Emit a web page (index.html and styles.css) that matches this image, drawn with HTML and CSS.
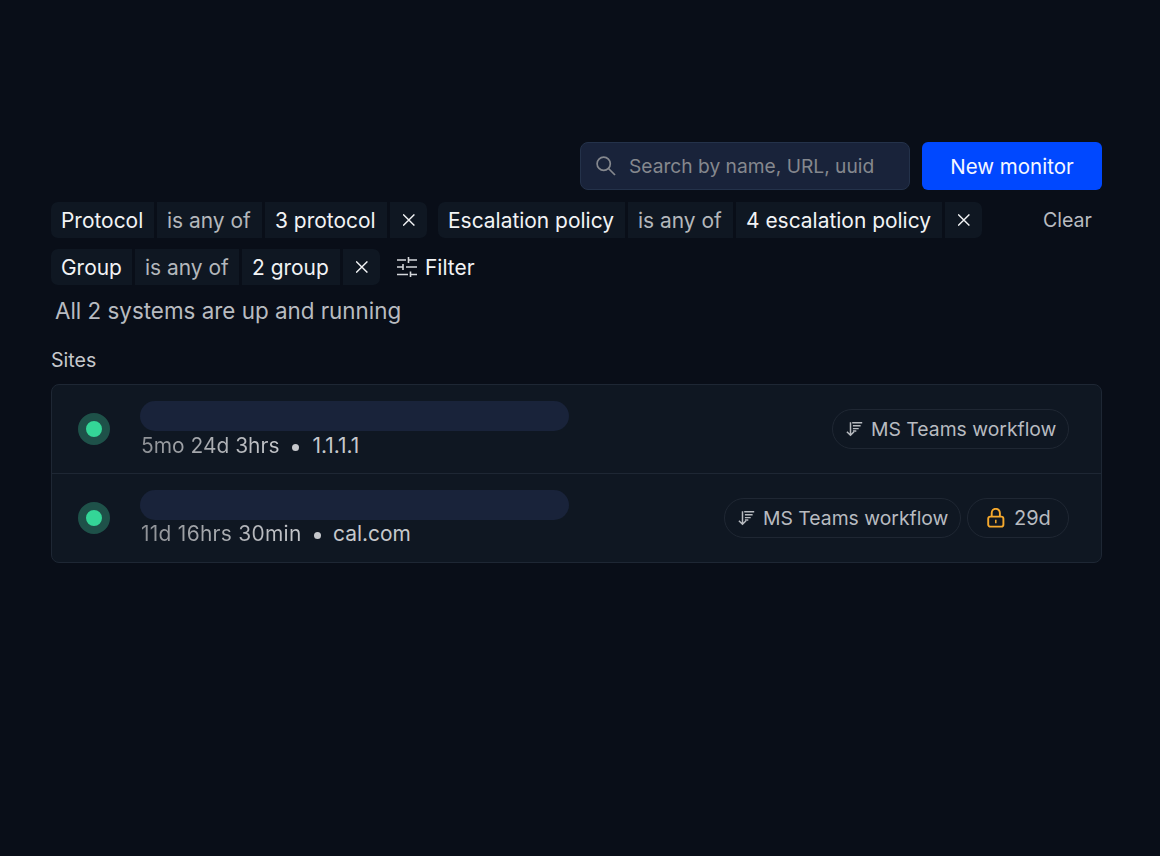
FILE: index.html
```html
<!DOCTYPE html>
<html lang="en">
<head>
<meta charset="utf-8">
<title>Monitors</title>
<link rel="stylesheet" href="styles.css">
</head>
<body>
<svg class="defs" width="0" height="0" aria-hidden="true">
  <symbol id="x" viewBox="0 0 12 12"><path d="M.2.4l11.2 11.2M11.4.4L.2 11.6" fill="none" stroke="currentColor" stroke-width="1.35"/></symbol>
  <symbol id="sort" viewBox="0 0 17 16"><g fill="none" stroke="currentColor" stroke-width="1.5"><path d="M4.5 1.2v13M.9 10.8l3.6 3.5L8 10.8"/><path d="M6.2 1.7h10M6.9 4.7h7.7M6.9 7.6h5.8M6.9 10h3.4" stroke-width="1.4"/></g></symbol>
</svg>
<main class="page">
  <header class="toolbar">
    <div class="search">
      <svg class="search-icon" viewBox="0 0 20 20"><g fill="none" stroke="currentColor" stroke-width="1.7"><circle cx="7.7" cy="7.7" r="6.6"/><path d="M12.5 12.5L19 19"/></g></svg>
      <span>Search by name, URL, uuid</span>
    </div>
    <button class="primary">New monitor</button>
  </header>

  <section class="filters">
    <div class="filter-row">
      <div class="group">
        <span class="chip w-protocol">Protocol</span>
        <span class="chip op">is any of</span>
        <span class="chip w-protocol-value">3 protocol</span>
        <span class="chip close"><svg><use href="#x"/></svg></span>
      </div>
      <div class="group">
        <span class="chip w-escalation">Escalation policy</span>
        <span class="chip op">is any of</span>
        <span class="chip w-escalation-value">4 escalation policy</span>
        <span class="chip close"><svg><use href="#x"/></svg></span>
      </div>
      <span class="clear">Clear</span>
    </div>
    <div class="filter-row">
      <div class="group">
        <span class="chip w-group">Group</span>
        <span class="chip op narrow">is any of</span>
        <span class="chip w-group-value">2 group</span>
        <span class="chip close"><svg><use href="#x"/></svg></span>
      </div>
      <div class="add-filter">
        <svg class="filter-icon" viewBox="0 0 20 20"><path d="M0 3h9M11.5 3H20M11.5 0v6M0 10h6M9 10h11M6 7v6M0 17.5h11M13.5 17.5H20M13.5 14.5V20" fill="none" stroke="currentColor" stroke-width="1.6"/></svg>
        <span>Filter</span>
      </div>
    </div>
  </section>

  <p class="summary">All 2 systems are up and running</p>
  <h2 class="heading">Sites</h2>

  <section class="card">
    <article class="row">
      <span class="status"></span>
      <div class="info">
        <div class="bar"></div>
        <div class="meta"><span class="uptime">5mo 24d 3hrs</span><i class="dot"></i><span class="host">1.1.1.1</span></div>
      </div>
      <div class="tags">
        <span class="tag"><svg class="sort-icon"><use href="#sort"/></svg><span>MS Teams workflow</span></span>
      </div>
    </article>
    <article class="row">
      <span class="status"></span>
      <div class="info">
        <div class="bar"></div>
        <div class="meta"><span class="uptime wide">11d 16hrs 30min</span><i class="dot"></i><span class="host">cal.com</span></div>
      </div>
      <div class="tags">
        <span class="tag"><svg class="sort-icon"><use href="#sort"/></svg><span>MS Teams workflow</span></span>
        <span class="tag expiry"><svg class="lock-icon" viewBox="0 0 18 20"><g fill="none" stroke="currentColor" stroke-width="1.9"><rect x="1.2" y="8.6" width="15.2" height="10" rx="2.2"/><path d="M4.7 8.6V4.9a4.1 4.1 0 0 1 8.2 0v3.7"/><path d="M8.8 11.8v3.4" stroke-width="1.5"/></g></svg><span>29d</span></span>
      </div>
    </article>
  </section>
</main>
</body>
</html>
```
FILE: styles.css
```css
* { box-sizing: border-box; }
body {
  margin: 0;
  background: #090e18;
  color: #f2f3f5;
  font: 400 20.95px/28px Inter, "Liberation Sans", sans-serif;
  white-space: nowrap;
}
.defs { position: absolute; }
.page { width: 1160px; height: 856px; padding: 142px 58px 0 51px; }

.toolbar { display: flex; justify-content: flex-end; gap: 12px; height: 48px; }
.search {
  display: flex; align-items: center; gap: 13px;
  width: 330px; padding-left: 15px;
  border: 1px solid #24324a; border-radius: 8px;
  background: #19233a; color: #85888e;
  font-size: 19.2px;
}
.search-icon { width: 20px; height: 20px; }
.primary {
  width: 180px; padding: 2px 0 0; border: 0; border-radius: 6px;
  background: #0048ff; color: #f5f7ff;
  font: inherit; font-size: 20.5px;
}

.filters { display: grid; gap: 11px; margin-top: 12px; }
.filter-row { display: flex; align-items: center; gap: 11px; height: 36px; }
.group { display: flex; gap: 3px; }
.chip { height: 36px; padding-left: 10px; line-height: 37px; background: #0f1722; }
.chip:first-child { border-radius: 7px 0 0 7px; }
.chip:last-child { border-radius: 0 7px 7px 0; }
.op { width: 105px; color: #b4b7bc; }
.op.narrow { width: 104px; }
.close { display: grid; place-items: center; width: 37px; padding: 0; }
.close svg { width: 12px; height: 12px; }
.w-protocol { width: 103px; }
.w-protocol-value { width: 122px; }
.w-escalation { width: 187px; }
.w-escalation-value { width: 206px; }
.w-group { width: 81px; }
.w-group-value { width: 98px; }
.clear { margin-left: auto; padding-right: 10px; color: #b8bbc0; font-size: 19.6px; }
.add-filter { display: flex; align-items: center; gap: 8px; margin-left: 6px; line-height: 37px; }
.filter-icon { width: 20px; height: 20px; color: #d5d7db; }

.summary { margin: 12px 0 0 4px; color: #b8bbc0; font-size: 22.4px; }
.heading { margin: 21px 0 0; color: #c6c8cc; font-size: 19.6px; font-weight: 400; }

.card { height: 179px; margin-top: 10px; border: 1px solid #1e2734; border-radius: 8px; background: #0f1722; }
.row { display: flex; height: 88px; padding: 0 32px 0 25px; }
.row + .row { height: 89px; border-top: 1px solid #1e2734; }
.status {
  width: 32px; height: 32px; margin: 28px 0 0 0.5px;
  border: 8px solid #1e5149; border-radius: 50%; background: #34d697;
}
.info { margin: 16px 0 0 30.5px; }
.bar { width: 429px; height: 30px; border-radius: 15px; background: #19233a; }
.meta { display: flex; align-items: center; height: 30px; padding-left: 1px; color: #c6c8cc; }
.row + .row .meta { height: 28px; }
.uptime { background: linear-gradient(90deg, #8e9196, #c6c8cc); background-clip: text; color: transparent; }
.uptime.wide { letter-spacing: 0.28px; }
.dot { width: 7px; height: 7px; margin: 2px 13px 0; border-radius: 50%; background: #c6c8cc; }
.uptime.wide + .dot { margin: 2px 12.5px 0 12px; }
.tags { display: flex; align-items: center; gap: 6px; margin-left: auto; }
.tag {
  display: flex; align-items: center; gap: 8px;
  width: 237px; height: 40px; padding-left: 13px;
  border: 1px solid #1f2733; border-radius: 20px; color: #b8bbc0; font-size: 19.35px;
}
.sort-icon { width: 17px; height: 16px; }
.expiry { width: 102px; padding-left: 19px; gap: 9px; font-size: 20px; }
.lock-icon { width: 18px; height: 20px; color: #f6a92d; }
```
